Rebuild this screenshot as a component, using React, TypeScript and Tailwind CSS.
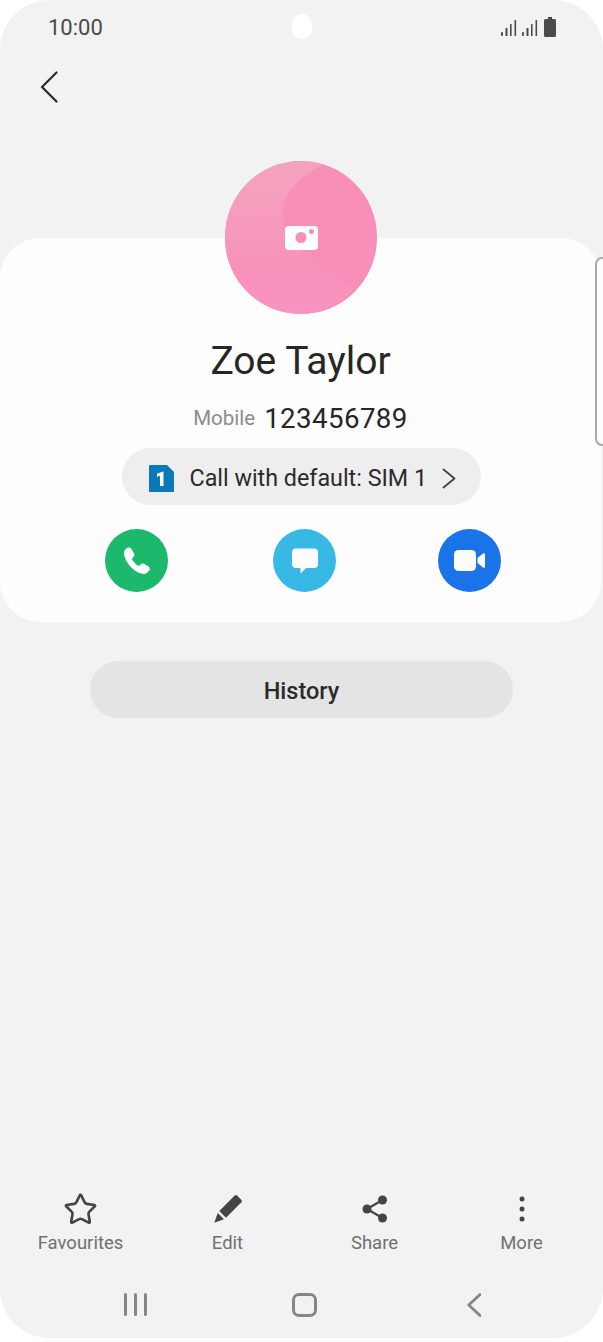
import React from 'react';
import { Star } from 'lucide-react';

const font = { roboto: "font-['Roboto',sans-serif]" };

const SignalBars = () => (
    <svg width="16" height="18" viewBox="0 0 16 18" fill="#4a4a4a">
        <rect x="0" y="14" width="2" height="4" rx="1" />
        <rect x="4.5" y="10" width="2" height="8" rx="0.6" />
        <rect x="9" y="6" width="1.6" height="12" rx="0.6" />
        <rect x="13.5" y="2" width="1.6" height="16" rx="0.6" />
    </svg>
);

const ActionCircle: React.FC<{ color: string; children: React.ReactNode }> = ({ color, children }) => (
    <div className={`w-[63px] h-[63px] rounded-full flex items-center justify-center ${color}`}>{children}</div>
);

const BottomAction: React.FC<{ label: string; icon: React.ReactNode }> = ({ label, icon }) => (
    <div className="w-[147px] flex flex-col items-center">
        <div className="h-[34px] flex items-center justify-center">{icon}</div>
        <div className="text-[18.500px] leading-[28px] text-[#707070] mt-[3px]">{label}</div>
    </div>
);

const App: React.FC = () => {
    return (
        <div className={`relative w-[603px] h-[1342px] bg-white overflow-hidden ${font.roboto}`}>
            <div className="relative w-full h-[1338px] bg-[#f2f2f2] rounded-[50px] flex flex-col overflow-hidden">
                {/* status bar */}
                <div className="h-[54px] pl-[48px] pr-[47px] flex items-center justify-between">
                    <span className="text-[22px] text-[#4a4a4a] leading-none mt-[2px]">10:00</span>
                    <div className="flex items-center gap-[5px] -mt-[1px]">
                        <SignalBars />
                        <SignalBars />
                        <svg width="12" height="20" viewBox="0 0 12 20" fill="#4a4a4a" className="ml-[1px]">
                            <path d="M4 0h4v2h2.500a1.500 1.500 0 0 1 1.500 1.500V18.500a1.500 1.500 0 0 1-1.500 1.500h-9A1.500 1.500 0 0 1 0 18.500V3.500A1.500 1.500 0 0 1 1.500 2H4z" />
                        </svg>
                    </div>
                </div>
                <div className="absolute left-[292px] top-[14px] w-[20px] h-[25px] rounded-[10px] bg-white" />

                {/* back */}
                <div className="h-[107px] pl-[40px] pt-[17px]">
                    <svg width="18" height="32" viewBox="0 0 18 32" fill="none" stroke="#2b2b2b" strokeWidth="2.200" strokeLinecap="round" strokeLinejoin="round">
                        <path d="M16.500 1.500 2 16l14.500 14.500" />
                    </svg>
                </div>

                {/* avatar */}
                <div className="relative z-10 ml-[225px] w-[152px] h-[153px] rounded-full overflow-hidden bg-[#f78fb8] flex items-center justify-center">
                    <svg className="absolute inset-0" width="152" height="153" viewBox="0 0 152 153">
                        <defs>
                            <linearGradient id="avatarShade" x1="0" y1="0" x2="0" y2="1">
                                <stop offset="0" stopColor="#f4a4bf" />
                                <stop offset="0.7" stopColor="#f892bb" />
                                <stop offset="1" stopColor="#f993bf" />
                            </linearGradient>
                        </defs>
                        <path d="M0 0H103C75 15 55 35 58 55C62 85 85 100 130 128L152 153H0Z" fill="url(#avatarShade)" />
                    </svg>
                    <svg className="relative" width="33" height="24" viewBox="0 0 33 24">
                        <rect width="33" height="24" rx="4" fill="#fdfdfd" />
                        <circle cx="16" cy="11.500" r="5.500" fill="#f78fb8" />
                        <circle cx="26.500" cy="5.500" r="2.500" fill="#f78fb8" />
                    </svg>
                </div>

                {/* contact card */}
                <div className="-mt-[76px] mr-[2px] h-[384px] bg-[#fdfdfd] rounded-[40px] flex flex-col items-center pt-[98px]">
                    <div className="text-[39px] leading-[50px] text-[#262626]">Zoe Taylor</div>
                    <div className="flex items-center mt-[15px] h-[36px]">
                        <span className="text-[20.500px] text-[#8c8c8c] mr-[9px] -mt-[2px]">Mobile</span>
                        <span className="text-[27.700px] text-[#262626] tracking-[0.4px]">123456789</span>
                    </div>
                    <div className="mt-[11px] ml-[1px] w-[359px] h-[57px] rounded-full bg-[#eeeeee] flex items-center pl-[27px] pt-[3px]">
                        <svg width="25" height="27" viewBox="0 0 25 27">
                            <path d="M1 0H18L25 7V26a1 1 0 0 1-1 1H1a1 1 0 0 1-1-1V1a1 1 0 0 1 1-1Z" fill="#0b79b8" />
                            <path d="M14.500 6.500V21H11V10.700L8 11.700V8.800L14 6.500Z" fill="#fdfdfd" />
                        </svg>
                        <span className="ml-[16px] text-[23.300px] text-[#2b2b2b] whitespace-nowrap">Call with default: SIM 1</span>
                        <svg width="14" height="21" viewBox="0 0 14 21" fill="none" stroke="#444444" strokeWidth="1.800" strokeLinecap="round" strokeLinejoin="round" className="ml-[15px]">
                            <path d="M1.500 1.500 12.500 10.500 1.500 19.500" />
                        </svg>
                    </div>
                    <div className="mt-[24px] w-[396px] ml-[5px] flex items-center justify-between">
                        <ActionCircle color="bg-[#1cb96d]">
                            <svg width="28" height="29" viewBox="0 0 28 28" fill="#fdfdfd">
                                <path d="M4 1.500C5.500 .5 7.500 1 8.500 2.500L11 7C11.800 8.500 11.300 10 10 11L8.800 12C9.500 14.500 13 18.500 16 19.500L17.500 18C18.500 17 20 16.800 21.500 17.600L25.500 20C27 21 27.300 23 26 24.300L24 26.200C22.500 27.500 20.500 27.800 18 27C9 24 3 16 1 8C.5 5.500 1.500 3 4 1.500Z" />
                            </svg>
                        </ActionCircle>
                        <div className="ml-[3px]">
                            <ActionCircle color="bg-[#38b9e5]">
                                <svg width="26" height="26" viewBox="0 0 26 26">
                                    <path d="M4 0.500H22a4 4 0 0 1 4 4V16a4 4 0 0 1-4 4H14L8.500 25.500V20H4a4 4 0 0 1-4-4V4.500a4 4 0 0 1 4-4Z" fill="#fdfdfd" />
                                </svg>
                            </ActionCircle>
                        </div>
                        <ActionCircle color="bg-[#1a73e8]">
                            <svg width="31" height="21" viewBox="0 0 31 21">
                                <rect width="22" height="21" rx="4.500" fill="#fdfdfd" />
                                <path d="M23.500 8L29 3.500C30 2.800 31 3.300 31 4.500V16.500C31 17.700 30 18.200 29 17.500L23.500 13Z" fill="#fdfdfd" />
                            </svg>
                        </ActionCircle>
                    </div>
                </div>

                {/* history */}
                <div className="mt-[39px] mx-auto w-[423px] h-[57px] rounded-full bg-[#e4e4e4] flex items-center justify-center">
                    <span className="text-[23.500px] font-medium text-[#2b2b2b] mt-[5px]">History</span>
                </div>

                <div className="flex-1" />

                {/* bottom actions */}
                <div className="flex pl-[7px]">
                    <BottomAction label="Favourites" icon={<Star size={35} strokeWidth={1.8} color="#444444" />} />
                    <BottomAction
                        label="Edit"
                        icon={
                            <svg width="28" height="28" viewBox="0 0 28 28" fill="#444444">
                                <path d="M20.500 0.800a2 2 0 0 1 2.800 0l3.900 3.900a2 2 0 0 1 0 2.800L12 22.700 5.300 16Z" />
                                <path d="M3.800 18 10 24.200 1 27.500a.4.4 0 0 1-.500-.500Z" />
                            </svg>
                        }
                    />
                    <BottomAction
                        label="Share"
                        icon={
                            <svg width="26" height="28" viewBox="0 0 26 28" fill="#444444">
                                <circle cx="20.500" cy="5" r="4.500" />
                                <circle cx="5" cy="14" r="4.500" />
                                <circle cx="20.500" cy="23" r="4.500" />
                                <path d="M20.500 5 5 14l15.500 9" fill="none" stroke="#444444" strokeWidth="2.200" />
                            </svg>
                        }
                    />
                    <BottomAction
                        label="More"
                        icon={
                            <svg width="6" height="26" viewBox="0 0 6 26" fill="#444444">
                                <circle cx="3" cy="3" r="2.500" />
                                <circle cx="3" cy="13" r="2.500" />
                                <circle cx="3" cy="23" r="2.500" />
                            </svg>
                        }
                    />
                </div>

                {/* nav bar */}
                <div className="h-[46px] mt-[35px] flex items-start pt-[1px]">
                    <div className="flex-1 flex items-start justify-between pl-[124px] pr-[122px]">
                        <div className="flex gap-[7px]">
                            <div className="w-[3px] h-[23px] rounded-full bg-[#858585]" />
                            <div className="w-[3px] h-[23px] rounded-full bg-[#858585]" />
                            <div className="w-[3px] h-[23px] rounded-full bg-[#858585]" />
                        </div>
                        <div className="w-[25px] h-[24px] rounded-[7px] border-[3px] border-[#858585] mr-[5px]" />
                        <svg width="14" height="24" viewBox="0 0 14 24" fill="none" stroke="#858585" strokeWidth="2.800" strokeLinecap="round" strokeLinejoin="round">
                            <path d="M13 1.500 1.800 12 13 22.500" />
                        </svg>
                    </div>
                </div>

                {/* edge panel handle */}
                <div className="absolute right-0 top-[257px] w-[8px] h-[189px] border-l-2 border-y-2 border-[#a9a9a9] rounded-l-[7px] bg-[#fdfdfd]" />
            </div>
        </div>
    );
};

export default App;
